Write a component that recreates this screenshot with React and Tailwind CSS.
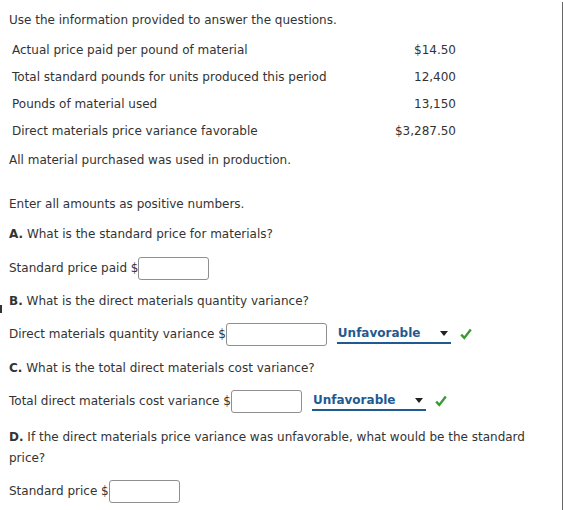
import React from 'react';

const rows = [
  ['Actual price paid per pound of material', '$14.50'],
  ['Total standard pounds for units produced this period', '12,400'],
  ['Pounds of material used', '13,150'],
  ['Direct materials price variance favorable', '$3,287.50'],
];

function Box({ w }) {
  return <div className={`h-[23px] rounded-[3px] border border-[#8f8f8f] bg-white ${w}`} />;
}

function Pick({ w }) {
  return (
    <div className={`flex h-[20px] items-center justify-between border-b-2 border-[#1f5a91] pl-[1px] pr-[3px] ${w}`}>
      <span className="font-bold text-[#1f5a91]">Unfavorable</span>
      <svg width="8" height="5" viewBox="0 0 8 5"><path d="M0 0h8L4 5z" fill="#222" /></svg>
    </div>
  );
}

function Check() {
  return (
    <svg width="12" height="12" viewBox="0 0 12 12">
      <path d="M1.2 6.6l3.1 3.3L10.8 1.6" fill="none" stroke="#3a9a35" strokeWidth="2.4" />
    </svg>
  );
}

export default function App() {
  return (
    <div className="relative h-[510px] w-[563px] overflow-hidden bg-white text-[12px] leading-[18px] text-[#333]" style={{ fontFamily: '"DejaVu Sans", Verdana, sans-serif' }}>
      <div className="absolute right-0 top-[2px] h-[508px] w-[1px] bg-[#666]" />
      <div className="absolute left-0 top-[305px] h-[8px] w-[2px] bg-[#333]" />

      <div className="pl-[9px]">
        <p className="pt-[11px]">Use the information provided to answer the questions.</p>

        <div className="mt-[7px] w-[447px]">
          {rows.map(([label, value]) => (
            <div key={label} className="flex h-[27px] items-center justify-between pl-[3px]">
              <span>{label}</span>
              <span>{value}</span>
            </div>
          ))}
        </div>

        <p className="mt-[7px]">All material purchased was used in production.</p>

        <p className="mt-[26px]">Enter all amounts as positive numbers.</p>

        <p className="mt-[12px]"><b>A.</b> What is the standard price for materials?</p>

        <div className="mt-[13px] flex h-[24px] items-center">
          <span>Standard price paid $</span>
          <Box w="w-[71px]" />
        </div>

        <p className="mt-[12px]"><b>B.</b> What is the direct materials quantity variance?</p>

        <div className="mt-[12px] flex h-[24px] items-center">
          <span>Direct materials quantity variance $</span>
          <Box w="w-[101px]" />
          <div className="ml-[10px]"><Pick w="w-[114px]" /></div>
          <div className="ml-[9px]"><Check /></div>
        </div>

        <p className="mt-[13px]"><b>C.</b> What is the total direct materials cost variance?</p>

        <div className="mt-[12px] flex h-[24px] items-center">
          <span>Total direct materials cost variance $</span>
          <Box w="w-[71px]" />
          <div className="ml-[10px]"><Pick w="w-[114px]" /></div>
          <div className="ml-[9px]"><Check /></div>
        </div>

        <p className="mt-[14px] w-[535px] leading-[21px]"><b>D.</b> If the direct materials price variance was unfavorable, what would be the standard price?</p>

        <div className="mt-[10px] flex h-[24px] items-center">
          <span>Standard price $</span>
          <Box w="w-[71px]" />
        </div>
      </div>
    </div>
  );
}
